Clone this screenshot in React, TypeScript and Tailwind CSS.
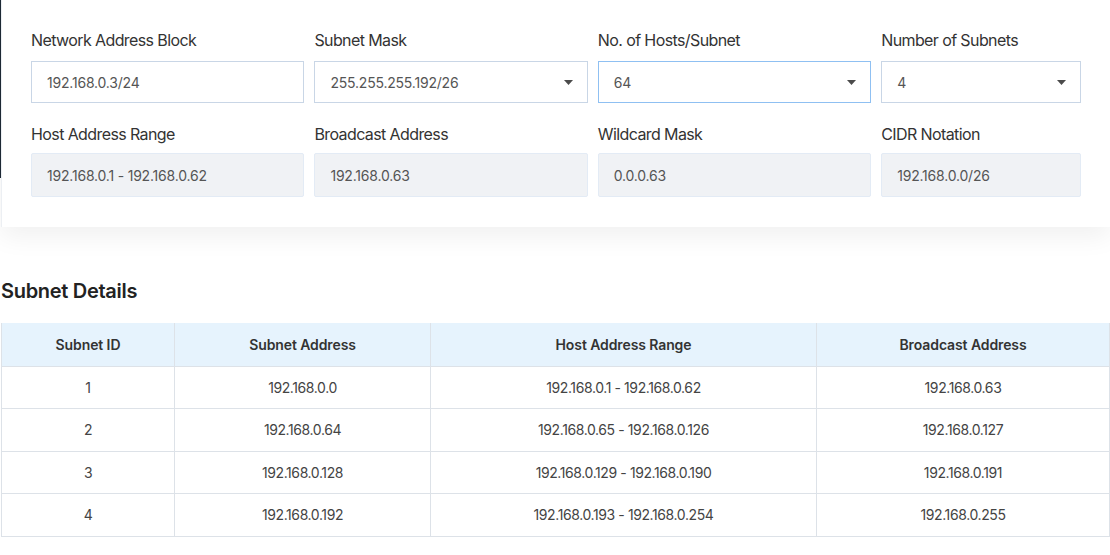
import React from 'react';

type Field = { label: string; value: string; select?: boolean; focused?: boolean };

const inputs: Field[] = [
  { label: 'Network Address Block', value: '192.168.0.3/24' },
  { label: 'Subnet Mask', value: '255.255.255.192/26', select: true },
  { label: 'No. of Hosts/Subnet', value: '64', select: true, focused: true },
  { label: 'Number of Subnets', value: '4', select: true },
];

const outputs: Field[] = [
  { label: 'Host Address Range', value: '192.168.0.1 - 192.168.0.62' },
  { label: 'Broadcast Address', value: '192.168.0.63' },
  { label: 'Wildcard Mask', value: '0.0.0.63' },
  { label: 'CIDR Notation', value: '192.168.0.0/26' },
];

const rows = [
  ['1', '192.168.0.0', '192.168.0.1 - 192.168.0.62', '192.168.0.63'],
  ['2', '192.168.0.64', '192.168.0.65 - 192.168.0.126', '192.168.0.127'],
  ['3', '192.168.0.128', '192.168.0.129 - 192.168.0.190', '192.168.0.191'],
  ['4', '192.168.0.192', '192.168.0.193 - 192.168.0.254', '192.168.0.255'],
];

function Caret() {
  return (
    <svg width="9" height="5" viewBox="0 0 9 5" className="shrink-0">
      <path d="M0 0 L9 0 L4.5 5 Z" fill="#4b4b4b" />
    </svg>
  );
}

function InputBox({ field }: { field: Field }) {
  return (
    <div>
      <div className="mb-[10px] text-[16px] leading-[22px] tracking-[-0.6px] text-[#333]">{field.label}</div>
      <div
        className={`flex h-[42px] items-center justify-between border bg-white pl-[15px] pr-[14px] text-[14px] tracking-[-0.2px] text-[#555] ${
          field.focused ? 'border-[#8fc0f2]' : 'border-[#c9d6e6]'
        }`}
      >
        <span>{field.value}</span>
        {field.select && <Caret />}
      </div>
    </div>
  );
}

function OutputBox({ field }: { field: Field }) {
  return (
    <div>
      <div className="mb-2 text-[16px] leading-[22px] tracking-[-0.6px] text-[#333]">{field.label}</div>
      <div className="flex h-[44px] items-center rounded-[2px] border border-[#e3ebf5] bg-[#f0f2f5] pl-[15px] text-[14px] tracking-[-0.2px] text-[#555]">
        {field.value}
      </div>
    </div>
  );
}

export default function App() {
  return (
    <div className="relative min-h-[555px] bg-white" style={{ fontFamily: 'Inter, "Noto Sans", sans-serif' }}>
      <div className="absolute left-0 top-0 h-[178px] w-[2px] bg-[#1e2a36]" />
      <section className="relative ml-[1px] border-l border-[#eceff3] bg-white pb-[30px] pl-[29px] pr-[30px] pt-[29px] shadow-[0_10px_24px_rgba(0,0,0,0.06)]">
        <div className="grid grid-cols-[273.4px_273.4px_273.4px_200px] gap-x-[10px] gap-y-[20px]">
          {inputs.map((f) => (
            <InputBox key={f.label} field={f} />
          ))}
          {outputs.map((f) => (
            <OutputBox key={f.label} field={f} />
          ))}
        </div>
      </section>

      <h2 className="ml-[1px] mt-[52px] text-[20px] font-semibold leading-[24px] tracking-[-0.3px] text-[#222]">Subnet Details</h2>

      <table className="ml-[1px] mt-[20px] w-[1109px] table-fixed border-collapse text-center text-[14px]">
        <colgroup>
          <col className="w-[173px]" />
          <col className="w-[256px]" />
          <col className="w-[386px]" />
          <col />
        </colgroup>
        <thead>
          <tr className="h-[43px] bg-[#e6f3fd]">
            {['Subnet ID', 'Subnet Address', 'Host Address Range', 'Broadcast Address'].map((h) => (
              <th key={h} className="border-x border-[#dde2e8] font-semibold tracking-[-0.1px] text-[#333]">
                {h}
              </th>
            ))}
          </tr>
        </thead>
        <tbody>
          {rows.map((r) => (
            <tr key={r[0]} className="h-[42.5px]">
              {r.map((c, i) => (
                <td key={i} className="border border-[#dde2e8] tracking-[-0.4px] text-[#444]">
                  {c}
                </td>
              ))}
            </tr>
          ))}
        </tbody>
      </table>
    </div>
  );
}
